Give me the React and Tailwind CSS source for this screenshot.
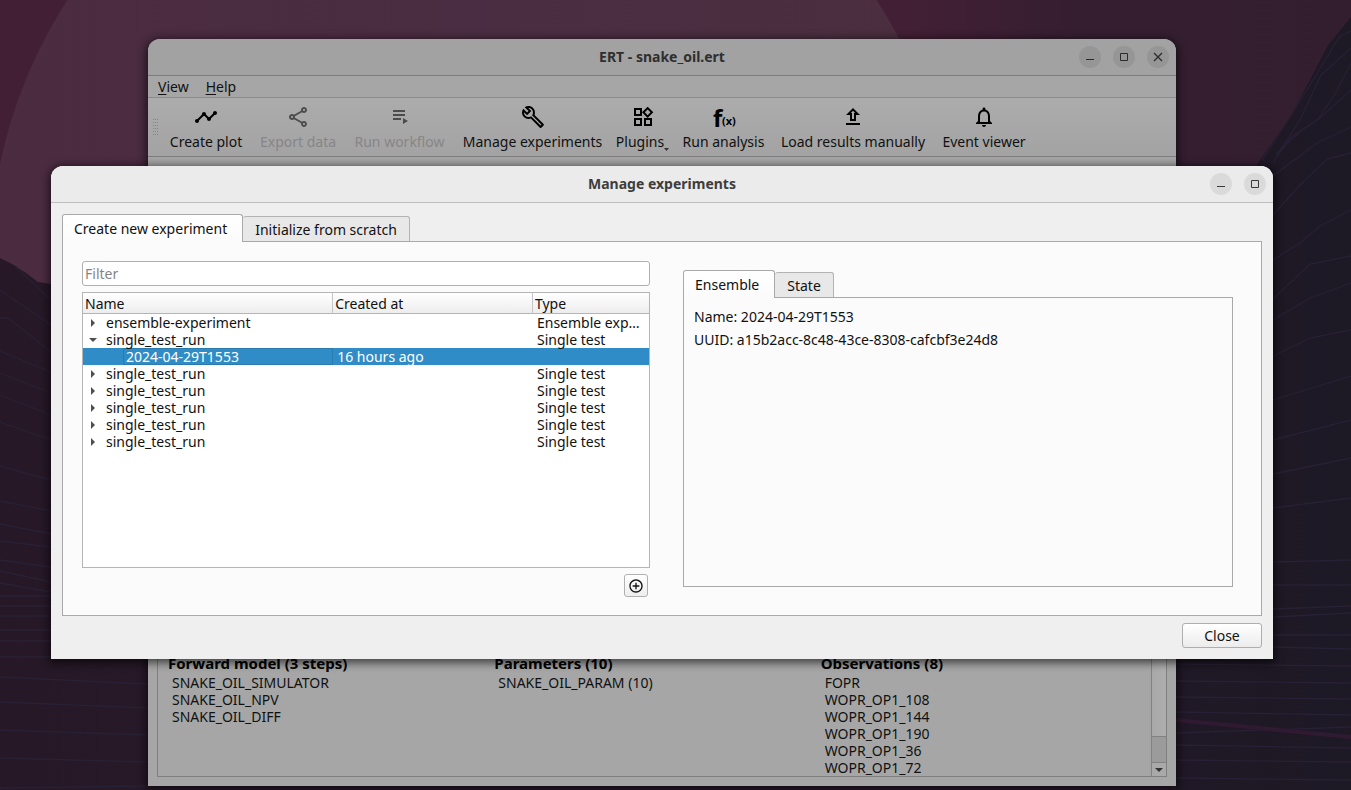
import { useState } from "react";
import {
  MdAddCircleOutline,
  MdOutlineBuild,
  MdOutlineNotifications,
  MdOutlineShare,
  MdOutlineUpload,
  MdOutlineWidgets,
  MdTimeline,
} from "react-icons/md";

const forwardModel = ["SNAKE_OIL_SIMULATOR", "SNAKE_OIL_NPV", "SNAKE_OIL_DIFF"];
const parameters = ["SNAKE_OIL_PARAM (10)"];
const observations = ["FOPR", "WOPR_OP1_108", "WOPR_OP1_144", "WOPR_OP1_190", "WOPR_OP1_36", "WOPR_OP1_72"];

const experiments = [
  { name: "ensemble-experiment", type: "Ensemble exp…", ensembles: [] },
  { name: "single_test_run", type: "Single test", ensembles: [{ name: "2024-04-29T1553", created: "16 hours ago" }] },
  { name: "single_test_run", type: "Single test", ensembles: [] },
  { name: "single_test_run", type: "Single test", ensembles: [] },
  { name: "single_test_run", type: "Single test", ensembles: [] },
  { name: "single_test_run", type: "Single test", ensembles: [] },
  { name: "single_test_run", type: "Single test", ensembles: [] },
];

function Wallpaper() {
  return (
    <svg className="absolute inset-0 h-full w-full" viewBox="0 0 1351 790" preserveAspectRatio="none" aria-hidden="true">
      <defs>
        <linearGradient id="sky" x1="0" x2="1" y1="0" y2="0">
          <stop offset="0" stopColor="#421f34" />
          <stop offset="0.67" stopColor="#421f34" />
          <stop offset="0.8" stopColor="#351e30" />
          <stop offset="1" stopColor="#331e30" />
        </linearGradient>
        <linearGradient id="disc" x1="0" x2="1" y1="0" y2="0">
          <stop offset="0" stopColor="#4b2b40" />
          <stop offset="0.5" stopColor="#4a2d42" />
          <stop offset="1" stopColor="#4a2f3f" />
        </linearGradient>
        <linearGradient id="ground" x1="0" x2="1" y1="0" y2="0">
          <stop offset="0" stopColor="#261827" />
          <stop offset="0.12" stopColor="#271928" />
          <stop offset="0.88" stopColor="#201826" />
          <stop offset="1" stopColor="#1d1925" />
        </linearGradient>
      </defs>
      <rect width="1351" height="790" fill="url(#sky)" />
      <circle cx="472" cy="262" r="482" fill="url(#disc)" />
      <path
        d="M0 258 L12 264 L26 273 L38 282 L51 284 L148 300 L1176 300 L1260 160 L1290 117 L1312 76 L1328 45 L1351 17 V790 H0Z"
        fill="url(#ground)"
      />
      <g fill="none" stroke="#282034" strokeWidth="1.3">
        <path d="M1351 31 L1340 36 L1316 75 L1290 117 L1262 160" />
        <path d="M1351 48 L1321 75 L1300 120 L1277 155" />
        <path d="M1351 63 L1335 94 L1318 119 L1302 130 L1276 154" />
        <path d="M1351 90 L1320 118 L1290 138 L1273 163" />
        <path d="M1351 127 L1317 143 L1273 176" />
        <path d="M1351 153 L1327 159 L1300 185 L1273 215" />
        <path d="M1351 210 L1320 226 L1300 243 L1273 260" />
        <path d="M1351 256 L1310 264 L1273 299" />
        <path d="M1351 283 L1310 298 L1273 320" />
        <path d="M1351 330 L1310 338 L1273 356 M1351 376 L1273 400 M1351 420 L1273 440 M1351 458 L1273 474 M1351 498 L1273 508" />
        <path d="M1351 560 L1273 562 M1351 585 H1273 M1351 606 L1273 609 M1351 613 L1273 617 M1351 635 H1273 M1351 649 L1273 647" />
        <path d="M1351 666 L1176 664 M1351 683 L1176 681 M1351 699 L1176 697 M1351 715 L1176 712 M1351 727 L1176 733 M1351 748 L1176 745 M1351 762 L1176 760 M1351 780 L1176 778" />
        <path d="M15 266 L51 300 M0 290 L51 325 M0 318 H8 L51 352 M0 351 L51 372 M0 373 L51 393 M0 395 L51 415 M0 422 L51 440 M0 466 L51 480" />
        <path d="M0 501 L51 511 M0 524 L51 534 M0 541 L51 547 M0 560 L51 567 M0 571 L51 582 M0 583 L51 592 M0 596 H51 M0 606 H51 M0 616 H51 M0 630 H51 M0 641 H51 M0 657 H51" />
        <path d="M0 677 L148 684 M0 702 L148 708 M0 730 L148 735 M0 758 L148 762 M0 788 L148 786" />
      </g>
      <path d="M1176 720 L1351 737" stroke="#301a32" strokeWidth="4" />
      <path d="M148 788 H1176" stroke="#2b1a2c" strokeWidth="4" />
    </svg>
  );
}

function WindowControls({ dim, closable }) {
  const button = dim
    ? "flex size-[22px] items-center justify-center rounded-full bg-[#969696] text-[#2c2c2c]"
    : "flex size-[22px] items-center justify-center rounded-full bg-[#dadada] text-[#3a3a3a]";
  return (
    <div className="flex gap-3">
      <button type="button" aria-label="Minimize" className={button}>
        <svg className="size-4" viewBox="0 0 16 16"><path d="M4 10h8v1H4z" fill="currentColor" /></svg>
      </button>
      <button type="button" aria-label="Maximize" className={button}>
        <svg className="size-4" viewBox="0 0 16 16"><path d="M4.5 4.5h7v7h-7z" fill="none" stroke="currentColor" /></svg>
      </button>
      {closable && (
        <button type="button" aria-label="Close window" className={button}>
          <svg className="size-4" viewBox="0 0 16 16"><path d="M4 4l8 8M12 4l-8 8" fill="none" stroke="currentColor" strokeWidth="1.3" /></svg>
        </button>
      )}
    </div>
  );
}

function TitleBar({ title, dim, closable }) {
  return (
    <header
      className={
        dim
          ? "grid h-[37px] shrink-0 grid-cols-[1fr_auto_1fr] items-center border-b border-[#7c7c7c] bg-[#a2a2a2] px-[7px] text-[#2f2f2f]"
          : "grid h-[37px] shrink-0 grid-cols-[1fr_auto_1fr] items-center border-b border-[#bfbfbf] bg-[#ebebeb] px-[7px] text-[#3d3d3d]"
      }
    >
      <span />
      <h1 className="text-sm font-bold">{title}</h1>
      <div className="flex justify-end">
        <WindowControls dim={dim} closable={closable} />
      </div>
    </header>
  );
}

function PlaylistIcon() {
  return (
    <svg className="size-6" viewBox="0 0 24 24" fill="currentColor">
      <path d="M5 5h12v2H5zM5 9h12v2H5zM5 13h8v2H5zM15 13v6l5-3z" />
    </svg>
  );
}

function FunctionIcon() {
  return (
    <svg className="size-6 overflow-visible" viewBox="0 0 24 24" fill="currentColor" fontWeight="bold">
      <text x="1" y="22" fontSize="24">f</text>
      <text x="10" y="20" fontSize="11">(x)</text>
    </svg>
  );
}

function Tool({ icon, label, width, disabled, menu }) {
  return (
    <button type="button" disabled={disabled} className={`${width} flex shrink-0 flex-col items-center gap-[3px] pt-[7px]`}>
      <span className={disabled ? "text-[#4c4c4c]" : "text-black"}>{icon}</span>
      <span className={disabled ? "flex items-end whitespace-nowrap text-[#868686]" : "flex items-end whitespace-nowrap text-[#111]"}>
        {label}
        {menu && (
          <svg className="h-1 w-[5px]" viewBox="0 0 5 4"><path d="M0 0h5L2.500 3z" fill="#333" /></svg>
        )}
      </span>
    </button>
  );
}

function SummaryColumn({ title, items }) {
  return (
    <section>
      <h2 className="text-[15px] leading-[22px] font-bold text-black">{title}</h2>
      <ul className="pl-1">
        {items.map((item) => (
          <li key={item} className="leading-[17px] whitespace-nowrap">{item}</li>
        ))}
      </ul>
    </section>
  );
}

function MainWindow() {
  const iconClass = "size-6";
  return (
    <main className="absolute top-[39px] right-[175px] bottom-1 left-[148px] flex flex-col overflow-hidden rounded-t-xl bg-[#a6a6a6] text-[#111] shadow-[0_2px_8px_2px_rgba(0,0,0,0.6)]">
      <TitleBar title="ERT - snake_oil.ert" dim closable />
      <nav className="flex h-[22px] shrink-0 items-center gap-[17px] border-b border-[#8b8b8b] px-[10px]">
        <button type="button"><u className="underline-offset-2">V</u>iew</button>
        <button type="button"><u className="underline-offset-2">H</u>elp</button>
      </nav>
      <div className="flex h-[59px] shrink-0 border-b border-[#7d7d7d] bg-linear-to-b from-[#acacac] to-[#a3a3a3] pl-[5px]">
        <svg className="mt-5 h-[18px] w-2 shrink-0" viewBox="0 0 8 18" aria-hidden="true">
          <path d="M.5 1v17M2.500 1v17M4.500 1v17" stroke="#848484" strokeDasharray="1 2" />
        </svg>
        <Tool width="w-[90px]" label="Create plot" icon={<MdTimeline className={iconClass} />} />
        <Tool width="w-[94px]" label="Export data" icon={<MdOutlineShare className={iconClass} />} disabled />
        <Tool width="w-[109px]" label="Run workflow" icon={<PlaylistIcon />} disabled />
        <Tool width="w-[157px]" label="Manage experiments" icon={<MdOutlineBuild className={iconClass} />} />
        <Tool width="w-[63px]" label="Plugins" icon={<MdOutlineWidgets className={iconClass} />} menu />
        <Tool width="w-[99px]" label="Run analysis" icon={<FunctionIcon />} />
        <Tool width="w-[160px]" label="Load results manually" icon={<MdOutlineUpload className={iconClass} />} />
        <Tool width="w-[102px]" label="Event viewer" icon={<MdOutlineNotifications className={iconClass} />} />
      </div>
      <div className="flex min-h-0 flex-1 px-[9px] pt-3 pb-[9px]">
        <div className="flex min-w-0 flex-1 border border-[#7f7f7f]">
          <div className="grid min-w-0 flex-1 grid-cols-3 content-end pr-1 pl-[10px]">
            <SummaryColumn title="Forward model (3 steps)" items={forwardModel} />
            <SummaryColumn title="Parameters (10)" items={parameters} />
            <SummaryColumn title="Observations (8)" items={observations} />
          </div>
          <div className="flex w-[15px] flex-col border-l border-[#828282] bg-[#9b9b9b]" aria-hidden="true">
            <div className="flex-1 border-b border-[#828282] bg-linear-to-r from-[#a8a8a8] to-[#aeaeae]" />
            <div className="h-[25px]" />
            <div className="flex h-[14px] items-center justify-center border-t border-[#828282] bg-[#a9a9a9]">
              <svg className="h-1 w-2" viewBox="0 0 8 4"><path d="M0 0h8L4 4z" fill="#333" /></svg>
            </div>
          </div>
        </div>
      </div>
    </main>
  );
}

function Tabs({ label, tabs, active, onSelect }) {
  return (
    <div role="tablist" aria-label={label} className="z-10 -mb-px flex items-end">
      {tabs.map((tab) => (
        <button
          key={tab}
          type="button"
          role="tab"
          aria-selected={tab === active}
          onClick={() => onSelect(tab)}
          className={
            tab === active
              ? "h-7 rounded-t-[3px] border border-b-0 border-[#a9a9a9] bg-linear-to-b from-white to-[#fbfbfb] pr-[15px] pl-[11px] whitespace-nowrap"
              : "mb-px h-[25px] rounded-t-[3px] border border-b-0 border-l-0 border-[#b3b3b3] bg-[#e8e8e8] px-3 pt-px whitespace-nowrap"
          }
        >
          {tab}
        </button>
      ))}
    </div>
  );
}

function Arrow({ open }) {
  return (
    <svg className="size-2" viewBox="0 0 8 8">
      <path d={open ? "M0 2h8L4 6z" : "M2 0l4 4-4 4z"} fill="#4f4f4f" />
    </svg>
  );
}

function ExperimentTree() {
  const [open, setOpen] = useState(1);
  return (
    <div className="min-h-0 flex-1 overflow-hidden border border-[#b5b5b5] bg-white">
      <table className="w-full table-fixed border-separate border-spacing-0 text-left">
        <colgroup>
          <col className="w-[44.200%]" />
          <col className="w-[35.300%]" />
          <col />
        </colgroup>
        <thead>
          <tr className="bg-linear-to-b from-white to-[#ececec] leading-[19px]">
            <th className="border-r border-b border-r-[#c6c6c6] border-b-[#b5b5b5] px-0.5 pt-px pb-0 font-normal">Name</th>
            <th className="border-r border-b border-r-[#c6c6c6] border-b-[#b5b5b5] px-0.5 pt-px pb-0 font-normal">Created at</th>
            <th className="border-b border-[#b5b5b5] px-0.5 pt-px pb-0 font-normal">Type</th>
          </tr>
        </thead>
        {experiments.map((experiment, index) => (
          <tbody key={index} className="leading-[17px]">
            <tr className="h-[17px]">
              <td className="p-0">
                <button
                  type="button"
                  aria-expanded={open === index}
                  onClick={() => setOpen(open === index ? -1 : index)}
                  className="flex items-center gap-[9px] pl-[6px]"
                >
                  <Arrow open={open === index} />
                  {experiment.name}
                </button>
              </td>
              <td className="p-0" />
              <td className="py-0 pr-0 pl-1 whitespace-nowrap">{experiment.type}</td>
            </tr>
            {open === index &&
              experiment.ensembles.map((ensemble) => (
                <tr key={ensemble.name} className="h-[17px] bg-[#308cc6] text-white">
                  <td className="p-0">
                    <div className="ml-10 h-[17px] border border-[#2a7bae] pl-0.5 leading-[15px]">{ensemble.name}</div>
                  </td>
                  <td className="py-0 pr-0 pl-1">{ensemble.created}</td>
                  <td className="p-0" />
                </tr>
              ))}
          </tbody>
        ))}
      </table>
    </div>
  );
}

function ManageExperiments() {
  const [page, setPage] = useState("Create new experiment");
  const [detail, setDetail] = useState("Ensemble");
  return (
    <section
      role="dialog"
      aria-label="Manage experiments"
      className="absolute top-[166px] right-[78px] bottom-[131px] left-[51px] flex flex-col overflow-hidden rounded-t-xl bg-[#efefef] text-[#111] shadow-[0_2px_9px_2px_rgba(0,0,0,0.6)]"
    >
      <TitleBar title="Manage experiments" />
      <div className="flex min-h-0 flex-1 flex-col px-[11px] pt-[11px] pb-[11px]">
        <Tabs label="Experiment setup" tabs={["Create new experiment", "Initialize from scratch"]} active={page} onSelect={setPage} />
        <div className="grid min-h-0 flex-1 grid-cols-[568fr_550fr] gap-[33px] border border-[#a9a9a9] bg-[#fbfbfb] pr-7 pb-[18px] pl-[19px]">
          <div className="flex min-h-0 flex-col gap-[6px] pt-[19px]">
            <input
              type="text"
              aria-label="Filter"
              placeholder="Filter"
              className="h-[25px] rounded-[3px] border border-[#b0b0b0] bg-white px-0.5 placeholder:text-[#858585]"
            />
            <ExperimentTree />
            <div className="flex justify-end pr-0.5">
              <button
                type="button"
                aria-label="Add ensemble"
                className="flex h-[23px] w-6 items-center justify-center rounded-[3px] border border-[#b0b0b0] bg-linear-to-b from-white to-[#eeeeee] text-[#111]"
              >
                <MdAddCircleOutline className="size-4" />
              </button>
            </div>
          </div>
          <div className="flex min-h-0 flex-col pt-7 pb-[10px]">
            <Tabs label="Details" tabs={["Ensemble", "State"]} active={detail} onSelect={setDetail} />
            <div role="tabpanel" className="flex flex-1 flex-col gap-[6px] border border-[#a9a9a9] bg-[#fbfbfb] p-[10px] leading-[17px]">
              <p>Name: 2024-04-29T1553</p>
              <p>UUID: a15b2acc-8c48-43ce-8308-cafcbf3e24d8</p>
            </div>
          </div>
        </div>
        <div className="flex justify-end pt-[7px]">
          <button type="button" className="h-[25px] w-20 rounded-[3px] border border-[#aeaeae] bg-linear-to-b from-white to-[#ececec]">
            Close
          </button>
        </div>
      </div>
    </section>
  );
}

export default function App() {
  return (
    <div className="relative h-screen overflow-hidden bg-[#201826] font-['Noto_Sans',sans-serif] text-sm">
      <Wallpaper />
      <MainWindow />
      <ManageExperiments />
    </div>
  );
}
